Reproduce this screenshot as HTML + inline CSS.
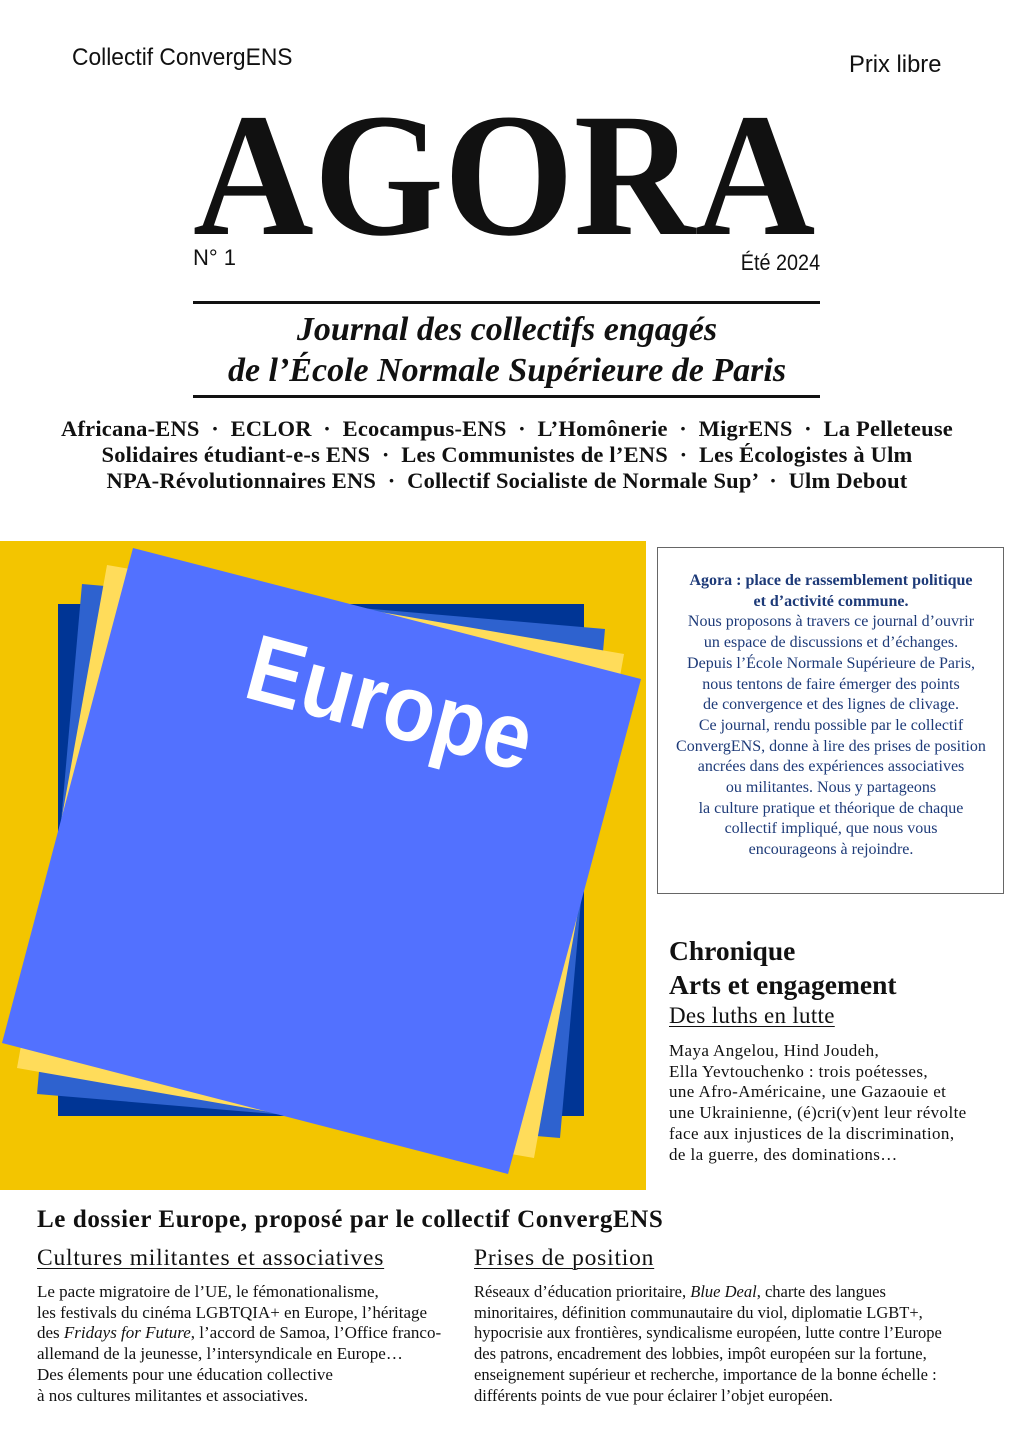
<!DOCTYPE html>
<html><head><meta charset="utf-8"><style>
*{margin:0;padding:0}
body{width:1014px;height:1434px;background:#fff;position:relative;overflow:hidden;font-family:"Liberation Serif",serif;color:#111}
.a{position:absolute;white-space:nowrap}
.c{text-align:center}
.sans{font-family:"Liberation Sans",sans-serif}
.box{position:absolute;left:657px;top:547px;width:347px;height:347px;border:1px solid #666;box-sizing:border-box}
.bl{color:#1d3a78;font-size:16px;line-height:20.7px;text-align:center;position:absolute;left:657px;width:348px;top:571px}
.col{font-size:17px;line-height:20.7px}
.u{text-decoration:underline;text-underline-offset:3px;text-decoration-thickness:1px}
</style></head><body>
<div class="a sans" style="left:72px;top:44px;font-size:24px;transform:scaleX(0.95);transform-origin:left">Collectif ConvergENS</div>
<div class="a sans" style="left:849px;top:51px;font-size:24px;transform:scaleX(0.99);transform-origin:left">Prix libre</div>
<div class="a" style="left:193px;top:88px;font-size:176px;line-height:176px;font-weight:bold;transform:scaleX(0.95);transform-origin:left">AGORA</div>
<div class="a sans" style="left:193px;top:245px;font-size:22px">N° 1</div>
<div class="a sans" style="right:194px;top:250px;font-size:22px;transform:scaleX(0.9);transform-origin:right">Été 2024</div>
<div class="a" style="left:193px;top:301px;width:627px;height:3px;background:#111"></div>
<div class="a" style="left:193px;top:395px;width:627px;height:3px;background:#111"></div>
<div class="a c" style="left:0;width:1014px;top:309px;font-size:34px;line-height:41px;font-weight:bold;font-style:italic">Journal des collectifs engagés<br>de l’École Normale Supérieure de Paris</div>
<div class="a c" style="left:0;width:1014px;top:416px;font-size:22.5px;line-height:26px;font-weight:bold;letter-spacing:0.2px">Africana-ENS &nbsp;·&nbsp; ECLOR &nbsp;·&nbsp; Ecocampus-ENS &nbsp;·&nbsp; L’Homônerie &nbsp;·&nbsp; MigrENS &nbsp;·&nbsp; La Pelleteuse<br>Solidaires étudiant-e-s ENS &nbsp;·&nbsp; Les Communistes de l’ENS &nbsp;·&nbsp; Les Écologistes à Ulm<br>NPA-Révolutionnaires ENS &nbsp;·&nbsp; Collectif Socialiste de Normale Sup’ &nbsp;·&nbsp; Ulm Debout</div>

<svg class="a" style="left:0;top:0" width="1014" height="1434">
<rect x="0" y="541" width="646" height="649" fill="#f3c500"/>
<rect x="58" y="604" width="526" height="512" fill="#003595"/>
<polygon points="82,584 605,629 560,1138 37,1094" fill="#2e62cf"/>
<polygon points="107,565 624,654 534,1158 17,1068" fill="#ffdc5a"/>
<polygon points="133,548 641,679 508,1174 2,1043" fill="#5271ff"/>
<text x="0" y="0" transform="translate(382,734) rotate(15) scale(0.9,1)" text-anchor="middle" font-family="Liberation Sans" font-weight="bold" font-size="94" fill="#fff">Europe</text>
</svg>

<div class="box"></div>
<div class="bl"><b>Agora : place de rassemblement politique<br>et d’activité commune.</b><br>Nous proposons à travers ce journal d’ouvrir<br>un espace de discussions et d’échanges.<br>Depuis l’École Normale Supérieure de Paris,<br>nous tentons de faire émerger des points<br>de convergence et des lignes de clivage.<br>Ce journal, rendu possible par le collectif<br>ConvergENS, donne à lire des prises de position<br>ancrées dans des expériences associatives<br>ou militantes. Nous y partageons<br>la culture pratique et théorique de chaque<br>collectif impliqué, que nous vous<br>encourageons à rejoindre.</div>

<div class="a" style="left:669px;top:934px;font-size:27.5px;line-height:34px;font-weight:bold">Chronique<br>Arts et engagement</div>
<div class="a u" style="left:669px;top:1003px;font-size:23px;letter-spacing:0.3px">Des luths en lutte</div>
<div class="a col" style="left:669px;top:1041px;letter-spacing:0.4px">Maya Angelou, Hind Joudeh,<br>Ella Yevtouchenko : trois poétesses,<br>une Afro-Américaine, une Gazaouie et<br>une Ukrainienne, (é)cri(v)ent leur révolte<br>face aux injustices de la discrimination,<br>de la guerre, des dominations…</div>

<div class="a" style="left:37px;top:1206px;font-size:25px;font-weight:bold;letter-spacing:0.6px">Le dossier Europe, proposé par le collectif ConvergENS</div>
<div class="a u" style="left:37px;top:1245px;font-size:23.5px;letter-spacing:0.8px">Cultures militantes et associatives</div>
<div class="a u" style="left:474px;top:1245px;font-size:23.5px;letter-spacing:0.8px">Prises de position</div>
<div class="a col" style="left:37px;top:1282px">Le pacte migratoire de l’UE, le fémonationalisme,<br>les festivals du cinéma LGBTQIA+ en Europe, l’héritage<br>des <i>Fridays for Future</i>, l’accord de Samoa, l’Office franco-<br>allemand de la jeunesse, l’intersyndicale en Europe…<br>Des élements pour une éducation collective<br>à nos cultures militantes et associatives.</div>
<div class="a col" style="left:474px;top:1282px;font-size:16.5px">Réseaux d’éducation prioritaire, <i>Blue Deal</i>, charte des langues<br>minoritaires, définition communautaire du viol, diplomatie LGBT+,<br>hypocrisie aux frontières, syndicalisme européen, lutte contre l’Europe<br>des patrons, encadrement des lobbies, impôt européen sur la fortune,<br>enseignement supérieur et recherche, importance de la bonne échelle :<br>différents points de vue pour éclairer l’objet européen.</div>
</body></html>
